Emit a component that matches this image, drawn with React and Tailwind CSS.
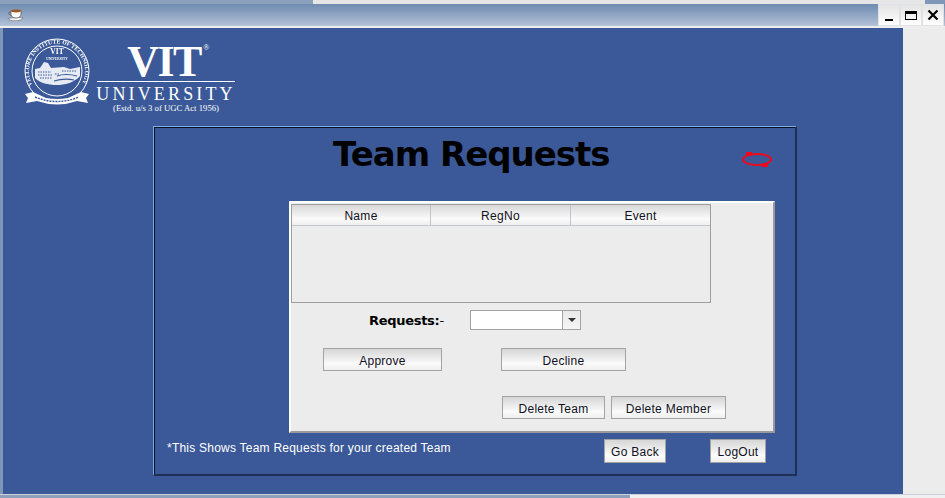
import React from "react";

const sans = "font-['Liberation_Sans',Arial,sans-serif]";
const btn =
  "flex items-center justify-center border border-[#a3a3a3] bg-gradient-to-b from-[#d6d6d6] via-[#fbfbfb] via-70% to-[#eeeeee] text-[12px] tracking-[0.25px] text-[#111122] h-[23px] pt-[2px] leading-none";
const hdr =
  "flex items-center justify-center h-[20px] pt-[2px] border-r border-[#bcc4c8] bg-gradient-to-b from-[#d8d8d8] via-[#fbfbfb] via-70% to-[#eeeeee] text-[12px] tracking-[0.3px] text-[#111122]";

function Cup() {
  return (
    <svg width="17" height="12" viewBox="0 0 17 12">
      <path d="M1 9.5C4 8.5 13 8.5 16 8.5C15 11 12 11.8 8 11.8S2 11 1 9.5z" fill="#f6f6f6" stroke="#6f6f6f" strokeWidth="0.7" />
      <path d="M4 1.6h10V5c0 2.6-2 4-5 4S4 7.6 4 5z" fill="#fafafa" stroke="#555" strokeWidth="0.7" />
      <ellipse cx="9" cy="2" rx="5" ry="1.4" fill="#9a5a22" />
      <path d="M4 3H2.6C1 3 1.4 6.4 4.4 6.4" fill="none" stroke="#666" strokeWidth="0.9" />
    </svg>
  );
}

function Seal() {
  return (
    <svg width="66" height="70" viewBox="0 0 66 70" className="-mt-[1px] blur-[0.35px]">
      <defs>
        <path id="sealArc" d="M8.5 47 A28 28 0 1 1 57.5 47" />
      </defs>
      <circle cx="33" cy="33" r="32" fill="none" stroke="#fff" strokeWidth="1" />
      <circle cx="33" cy="33" r="25" fill="none" stroke="#fff" strokeWidth="1" />
      <text fontSize="5.6" fontWeight="700" fill="#fff" fontFamily="Liberation Serif, serif" textLength="114" lengthAdjust="spacing">
        <textPath href="#sealArc">VELLORE INSTITUTE OF TECHNOLOGY</textPath>
      </text>
      <text x="33" y="16" textAnchor="middle" fontSize="7.5" fontWeight="700" fill="#fff" fontFamily="Liberation Serif, serif">VIT</text>
      <text x="33" y="22" textAnchor="middle" fontSize="3.4" fontWeight="700" fill="#fff" fontFamily="Liberation Serif, serif">UNIVERSITY</text>
      <path d="M11 40 V31 L16 30 L20 24 L24 25 L27 30 L40 29 L46 31 L56 29 V38 C50 45 40 47 33 47 C24 47 16 45 11 40z" fill="#e6ebf3" />
      <path d="M14 34h13M14 37h15M16 40h12M31 36h4M38 33h14" stroke="#3b5998" strokeWidth="1" strokeDasharray="1.5 1" />
      <path d="M33 38 Q42 35 53 38 M30 43 Q40 40 50 42" stroke="#3b5998" strokeWidth="1.2" fill="none" />
      <path d="M1 56 L9 54 L22 60 Q33 62 44 60 L57 54 L65 56 L62 60 L64 65 L53 63 Q33 70 13 63 L2 65 L4 60z" fill="#fff" />
      <path d="M11 59 Q33 68 55 59" fill="none" stroke="#3b5998" strokeWidth="1.4" strokeDasharray="2 1" />
    </svg>
  );
}

function Spinner() {
  return (
    <svg width="30" height="15" viewBox="0 0 30 15">
      <ellipse cx="15" cy="7.5" rx="14" ry="5.5" fill="none" stroke="#ee0a1e" strokeWidth="2" />
      <path d="M4 0h6v3.5H4zM20 11.5h6V15h-6z" fill="#ee0a1e" />
    </svg>
  );
}

function WinBtn({ children }) {
  return (
    <div className="flex h-[22px] w-[22px] items-center justify-center border border-[#dfe2e6] bg-gradient-to-b from-[#e4e4e4] to-white">
      {children}
    </div>
  );
}

export default function App() {
  return (
    <div className={`${sans} flex h-[498px] w-[945px] flex-col overflow-hidden bg-[#ececec]`}>
      {/* title bar */}
      <div className="flex h-[4px] w-full">
        <div className="w-[313px] bg-[#8da0bb]" />
        <div className="w-[612px] bg-[#e6e6e6]" />
        <div className="flex-1 bg-[#7f96b8]" />
      </div>
      <div className="flex h-[22px] w-full items-center bg-gradient-to-b from-[#6f8bb0] to-[#b3c2d8] pl-[7px]">
        <Cup />
        <div className="ml-auto mr-[1px] flex">
          <WinBtn><div className="mt-[10px] h-[2px] w-[8px] bg-black" /></WinBtn>
          <WinBtn><div className="h-[9px] w-[12px] border border-t-[3px] border-black" /></WinBtn>
          <WinBtn>
            <svg width="12" height="12" viewBox="0 0 12 12"><path d="M1.5 1.5l9 9M10.5 1.5l-9 9" stroke="#000" strokeWidth="2.2" /></svg>
          </WinBtn>
        </div>
      </div>
      <div className="h-[2px] w-full bg-[#eeeeee]" />

      {/* body */}
      <div className="flex h-[466px] w-full">
        <div className="w-[3px] bg-[#7f96b8]" />
        <div className="h-full w-[900px] bg-[#3b5998] pt-[11px]">
          {/* logo */}
          <div className="flex h-[87px] items-start pl-[21px]">
            <Seal />
            <div className="ml-[7px] flex w-[138px] flex-col items-center pt-[4px] font-['Liberation_Serif',serif] text-white">
              <div className="relative mr-[4px] h-[38px] text-[44px] font-bold leading-[38px] tracking-[-1.5px]">
                VIT
                <span className="absolute right-[-7px] top-[1px] text-[8px] font-normal leading-none">®</span>
              </div>
              <div className="h-[1px] w-full bg-white" />
              <div className="mt-[3px] text-[18px] leading-[18px] tracking-[3.15px] whitespace-nowrap">UNIVERSITY</div>
              <div className="text-[8.7px] font-normal leading-[11px] whitespace-nowrap">(Estd. u/s 3 of UGC Act 1956)</div>
            </div>
          </div>

          {/* panel */}
          <div className="ml-[150px] h-[350px] w-[644px] border-t border-l border-r-2 border-b-2 border-t-[#7fb0ee] border-l-[#7fa8e0] border-r-[#1f2f55] border-b-[#1f2f55] shadow-[inset_1px_1px_0_#0b1020]">
            <div className="flex h-[74px] items-start">
              <div className="ml-[179px] mt-[5px] whitespace-nowrap font-['DejaVu_Sans',sans-serif] text-[34px] font-bold leading-[44px] text-black tracking-[-1px]">
                Team Requests
              </div>
              <div className="ml-auto mr-[23px] mt-[25px]"><Spinner /></div>
            </div>

            <div className="ml-[135px] flex h-[232px] w-[486px] flex-col border-2 border-t-white border-l-white border-r-[#9a9a9a] border-b-[#9a9a9a] bg-[#ececec]">
              <div className="mt-[1px] h-[99px] w-[420px] border border-[#9e9e9e] bg-[#ececec]">
                <div className="flex border-b border-[#c0c6ca]">
                  <div className={`${hdr} w-[139px]`}>Name</div>
                  <div className={`${hdr} w-[140px]`}>RegNo</div>
                  <div className={`${hdr} w-[139px] border-r-0`}>Event</div>
                </div>
              </div>
              <div className="mt-[6px] flex h-[22px] items-center">
                <div className="ml-[78px] w-[101px] pt-[1px] font-['DejaVu_Sans',sans-serif] text-[13px] font-bold tracking-[-0.3px] text-black">
                  Requests:<span className="font-normal">-</span>
                </div>
                <div className="flex h-[20px] w-[111px] border border-[#a3a3a3] bg-white">
                  <div className="flex-1" />
                  <div className="flex w-[18px] items-center justify-center border-l border-[#a3a3a3] bg-gradient-to-b from-[#e8e8e8] to-[#f6f6f6]">
                    <div className="h-0 w-0 border-x-[4px] border-t-[4px] border-x-transparent border-t-[#333]" />
                  </div>
                </div>
              </div>
              <div className="mt-[17px] flex">
                <div className={`${btn} ml-[32px] w-[119px]`}>Approve</div>
                <div className={`${btn} ml-[59px] w-[125px]`}>Decline</div>
              </div>
              <div className="mt-[25px] flex">
                <div className={`${btn} ml-[211px] w-[103px]`}>Delete Team</div>
                <div className={`${btn} ml-[6px] w-[115px]`}>Delete Member</div>
              </div>
            </div>

            <div className="mt-[6px] flex items-start">
              <div className="ml-[13px] mt-[1px] text-[12px] leading-[16px] tracking-[0.23px] text-white">
                *This Shows Team Requests for your created Team
              </div>
              <div className={`${btn} ml-auto h-[24px] w-[62px] border-[#9fb0c8]`}>Go Back</div>
              <div className={`${btn} ml-[44px] mr-[29px] h-[24px] w-[56px] border-[#9fb0c8]`}>LogOut</div>
            </div>
          </div>
        </div>
        <div className="flex-1 bg-[#ececec]" />
      </div>

      <div className="h-[1px] w-full bg-[#c9d2de]" />
      <div className="flex h-[3px] w-full">
        <div className="w-[630px] bg-[#8da0bb]" />
        <div className="flex-1 bg-[#f0f0f0]" />
      </div>
    </div>
  );
}
